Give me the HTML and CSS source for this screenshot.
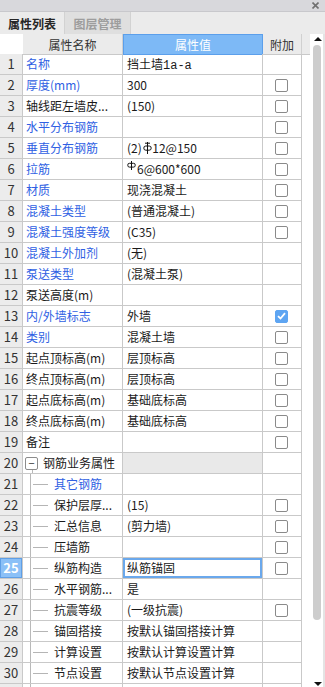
FILE: index.html
```html
<!DOCTYPE html>
<html lang="zh">
<head>
<meta charset="utf-8">
<title>属性列表</title>
<link rel="stylesheet" href="styles.css">
</head>
<body>
<div class="titlebar">
  <svg class="close" width="7" height="7" viewBox="0 0 7 7"><path d="M0.5 0.5L6.5 6.5M6.5 0.5L0.5 6.5" stroke="#707070" stroke-width="1.6"/></svg>
</div>
<div class="tabs">
  <div class="tab active">属性列表</div>
  <div class="tab inactive">图层管理</div>
</div>
<div class="main">
  <div class="grid">
    <div class="head">
      <div class="h-num"></div>
      <div class="h-name">属性名称</div>
      <div class="h-val">属性值</div>
      <div class="h-ext">附加</div>
      <div class="h-fill"></div>
    </div>

    <div class="row"><div class="num">1</div><div class="name blue">名称</div><div class="val">挡土墙<span class="mono">1a-a</span></div><div class="ext"></div></div>
    <div class="row"><div class="num">2</div><div class="name blue">厚度(mm)</div><div class="val">300</div><div class="ext"><span class="cb"></span></div></div>
    <div class="row"><div class="num">3</div><div class="name">轴线距左墙皮...</div><div class="val">(150)</div><div class="ext"><span class="cb"></span></div></div>
    <div class="row"><div class="num">4</div><div class="name blue">水平分布钢筋</div><div class="val"></div><div class="ext"><span class="cb"></span></div></div>
    <div class="row"><div class="num">5</div><div class="name blue">垂直分布钢筋</div><div class="val">(2)<svg class="sym3" width="9" height="12" viewBox="0 0 9 12"><path d="M4.5 0V12M2 1.2H7" stroke="#111" stroke-width="1" fill="none"/><rect x="0.8" y="4" width="7.4" height="4.2" rx="2" stroke="#111" stroke-width="1" fill="none"/></svg>12@150</div><div class="ext"><span class="cb"></span></div></div>
    <div class="row"><div class="num">6</div><div class="name blue">拉筋</div><div class="val"><svg class="sym1" width="9" height="9" viewBox="0 0 9 9"><path d="M4.5 0V9" stroke="#111" stroke-width="1" fill="none"/><rect x="0.8" y="2.3" width="7.4" height="3.8" rx="1.6" stroke="#111" stroke-width="1" fill="none"/></svg>6@600*600</div><div class="ext"><span class="cb"></span></div></div>
    <div class="row"><div class="num">7</div><div class="name blue">材质</div><div class="val">现浇混凝土</div><div class="ext"><span class="cb"></span></div></div>
    <div class="row"><div class="num">8</div><div class="name blue">混凝土类型</div><div class="val">(普通混凝土)</div><div class="ext"><span class="cb"></span></div></div>
    <div class="row"><div class="num">9</div><div class="name blue">混凝土强度等级</div><div class="val">(C35)</div><div class="ext"><span class="cb"></span></div></div>
    <div class="row"><div class="num">10</div><div class="name blue">混凝土外加剂</div><div class="val">(无)</div><div class="ext"></div></div>
    <div class="row"><div class="num">11</div><div class="name blue">泵送类型</div><div class="val">(混凝土泵)</div><div class="ext"></div></div>
    <div class="row"><div class="num">12</div><div class="name">泵送高度(m)</div><div class="val"></div><div class="ext"></div></div>
    <div class="row"><div class="num">13</div><div class="name blue">内/外墙标志</div><div class="val">外墙</div><div class="ext"><span class="cb checked"><svg width="9" height="8" viewBox="0 0 9 8"><path d="M1 4.2L3.5 6.5L8 1.2" stroke="#fff" stroke-width="1.8" fill="none"/></svg></span></div></div>
    <div class="row"><div class="num">14</div><div class="name blue">类别</div><div class="val">混凝土墙</div><div class="ext"><span class="cb"></span></div></div>
    <div class="row"><div class="num">15</div><div class="name">起点顶标高(m)</div><div class="val">层顶标高</div><div class="ext"><span class="cb"></span></div></div>
    <div class="row"><div class="num">16</div><div class="name">终点顶标高(m)</div><div class="val">层顶标高</div><div class="ext"><span class="cb"></span></div></div>
    <div class="row"><div class="num">17</div><div class="name">起点底标高(m)</div><div class="val">基础底标高</div><div class="ext"><span class="cb"></span></div></div>
    <div class="row"><div class="num">18</div><div class="name">终点底标高(m)</div><div class="val">基础底标高</div><div class="ext"><span class="cb"></span></div></div>
    <div class="row"><div class="num">19</div><div class="name">备注</div><div class="val"></div><div class="ext"><span class="cb"></span></div></div>
    <div class="row"><div class="num">20</div><div class="name group"><span class="toggle"><span class="tbox">−</span><span class="tline"></span></span><span class="gtext">钢筋业务属性</span></div><div class="val shaded"></div><div class="ext"></div></div>
    <div class="row"><div class="num">21</div><div class="name child"><span class="vline"></span><span class="hline"></span><span class="blue">其它钢筋</span></div><div class="val"></div><div class="ext"></div></div>
    <div class="row"><div class="num">22</div><div class="name child"><span class="vline"></span><span class="hline"></span><span>保护层厚...</span></div><div class="val">(15)</div><div class="ext"><span class="cb"></span></div></div>
    <div class="row"><div class="num">23</div><div class="name child"><span class="vline"></span><span class="hline"></span><span>汇总信息</span></div><div class="val">(剪力墙)</div><div class="ext"><span class="cb"></span></div></div>
    <div class="row"><div class="num">24</div><div class="name child"><span class="vline"></span><span class="hline"></span><span>压墙筋</span></div><div class="val"></div><div class="ext"><span class="cb"></span></div></div>
    <div class="row"><div class="num sel">25</div><div class="name child"><span class="vline"></span><span class="hline"></span><span>纵筋构造</span></div><div class="val editing">纵筋锚固</div><div class="ext"><span class="cb"></span></div></div>
    <div class="row"><div class="num">26</div><div class="name child"><span class="vline"></span><span class="hline"></span><span>水平钢筋...</span></div><div class="val">是</div><div class="ext"></div></div>
    <div class="row"><div class="num">27</div><div class="name child"><span class="vline"></span><span class="hline"></span><span>抗震等级</span></div><div class="val">(一级抗震)</div><div class="ext"><span class="cb"></span></div></div>
    <div class="row"><div class="num">28</div><div class="name child"><span class="vline"></span><span class="hline"></span><span>锚固搭接</span></div><div class="val">按默认锚固搭接计算</div><div class="ext"></div></div>
    <div class="row"><div class="num">29</div><div class="name child"><span class="vline"></span><span class="hline"></span><span>计算设置</span></div><div class="val">按默认计算设置计算</div><div class="ext"></div></div>
    <div class="row"><div class="num">30</div><div class="name child"><span class="vline"></span><span class="hline"></span><span>节点设置</span></div><div class="val">按默认节点设置计算</div><div class="ext"></div></div>
    <div class="row partial"><div class="num"></div><div class="name child"><span class="vline"></span></div><div class="val"></div><div class="ext"></div></div>
  </div>
  <div class="scrollbar">
    <svg class="arrow" width="8" height="4" viewBox="0 0 8 4"><path d="M0 4L4 0L8 4Z" fill="#111"/></svg>
    <div class="track"><div class="thumb"></div></div>
    <svg class="arrow" width="8" height="4" viewBox="0 0 8 4"><path d="M0 0L8 0L4 4Z" fill="#111"/></svg>
  </div>
</div>
</body>
</html>
```

FILE: styles.css
```css
* { box-sizing: border-box; margin: 0; padding: 0; }
html, body { width: 325px; height: 687px; overflow: hidden; }
body {
  font-family: "Noto Sans CJK SC", "Noto Sans", sans-serif;
  font-size: 12px;
  color: #1a1a1a;
  background: #fff;
}

.titlebar {
  height: 12px;
  background: #d8d8dc;
  border-bottom: 1px solid #c8c8cc;
  display: flex;
  justify-content: flex-end;
  align-items: center;
  padding-right: 6px;
}
.close { display: block; }

.tabs {
  height: 22px;
  background: #ebebeb;
  display: flex;
}
.tab {
  display: flex;
  align-items: center;
  justify-content: center;
  font-weight: bold;
  font-size: 12px;
}
.tab.active { width: 64px; color: #262626; }
.tab.inactive {
  width: 67px;
  background: #dfdfdf;
  color: #9d9d9d;
  border-left: 1px solid #d2d2d2;
  border-right: 1px solid #d2d2d2;
}

.main { display: flex; height: 653px; }
.grid { width: 310px; }

.head {
  display: grid;
  grid-template-columns: 23px 100px 140px 39px 8px;
  height: 20px;
}
.head > div {
  display: flex;
  align-items: center;
  justify-content: center;
  line-height: 19px;
  color: #333;
  font-size: 12px;
}
.h-num { background: #fff; }
.h-name, .h-ext, .h-fill {
  background: #ebebeb;
  border-bottom: 1px solid #c9c9c9;
}
.h-name, .h-ext { border-right: 1px solid #d0d0d0; }
.head .h-val {
  background: #7db9f6;
  border: 1px solid #5b9feb;
  color: #fff;
}

.row {
  display: grid;
  grid-template-columns: 23px 100px 140px 39px;
  height: 21px;
  width: 302px;
}
.row > div {
  border-right: 1px solid #c9c9c9;
  border-bottom: 1px solid #c9c9c9;
  line-height: 20px;
  white-space: nowrap;
  overflow: hidden;
}
.num {
  background: #ececec;
  text-align: center;
  font-size: 13px;
  color: #333;
}
.num.sel {
  background: #8bc0f7;
  color: #fff;
  font-weight: bold;
  box-shadow: inset 0 0 0 1px #5f9fe6;
}
.name { padding-left: 3px; }
.val { padding-left: 4px; }
.blue { color: #2f5fe3; }
.mono { font-family: "Liberation Mono", monospace; font-size: 12px; }
.ext { display: flex; align-items: center; justify-content: center; padding-right: 2px; }
.val.shaded { background: #e9e9e9; }
.val.editing { box-shadow: inset 0 0 0 2px #6aa8ec; }

.sym3 { vertical-align: -1px; margin: 0 0.5px 0 1px; }
.sym1 { vertical-align: 4px; margin-right: 1px; }

.cb {
  width: 13px;
  height: 13px;
  border: 1px solid #8a8a8a;
  border-radius: 2px;
  background: #fff;
  display: flex;
  align-items: center;
  justify-content: center;
}
.cb.checked { background: #5ea5f2; border-color: #5ea5f2; }

.name.group {
  display: flex;
  align-items: stretch;
  padding-left: 1px;
}
.toggle {
  width: 15px;
  display: flex;
  flex-direction: column;
  align-items: center;
  padding-top: 4px;
}
.tbox {
  width: 13px;
  height: 13px;
  border: 1px solid #8c8c8c;
  border-radius: 2px;
  font-size: 11px;
  line-height: 10px;
  text-align: center;
  color: #333;
}
.tline { flex: 1; width: 1px; background: #b9b9b9; margin-left: 1px; }
.gtext { margin-left: 4px; }

.name.child {
  display: flex;
  align-items: stretch;
  padding-left: 0;
}
.vline { width: 8px; border-right: 1px solid #b9b9b9; flex: none; }
.hline { width: 15px; margin-left: 2px; margin-right: 6px; align-self: center; border-top: 1px solid #b5b5b5; flex: none; }

.row.partial { height: 4px; }
.row.partial > div { border-bottom: 1px solid #c9c9c9; }

.scrollbar {
  width: 15px;
  display: flex;
  flex-direction: column;
  align-items: center;
  padding: 3px 0 1px 0;
  background: #fff;
  border-right: 2px solid #e4e4e4;
}
.arrow { display: block; flex: none; margin-left: 2px; }
.track { flex: 1; width: 100%; padding: 4px 0 0 3px; }
.thumb { width: 8px; height: 575px; background: #cdcdcd; border-radius: 4px; }
```
